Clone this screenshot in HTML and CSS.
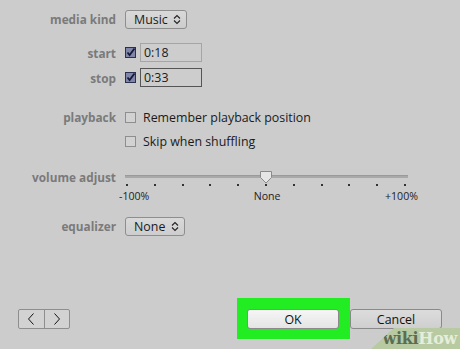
FILE: index.html
```html
<!DOCTYPE html>
<html lang="en">
<head>
    <meta charset="UTF-8">
    <meta name="viewport" content="width=device-width, initial-scale=1.0">
    <title>Options</title>
    <link rel="stylesheet" href="styles.css">
</head>
<body>
    <div class="panel">
        <div class="row row-kind">
            <span class="label">media kind</span>
            <div class="popup">
                <span>Music</span>
                <svg class="updown" width="8" height="11" viewBox="0 0 8 11"><path d="M1 4.5 L4 1.5 L7 4.5 M1 6.5 L4 9.5 L7 6.5" fill="none" stroke="#222" stroke-width="1.1"/></svg>
            </div>
        </div>

        <div class="row row-start">
            <span class="label">start</span>
            <svg class="check" width="11" height="11" viewBox="0 0 11 11"><rect x="0.5" y="0.5" width="10" height="10" fill="#7f86aa" stroke="#2b3050"/><path d="M2.5 5.5 L4.6 8 L9.5 1.5" fill="none" stroke="#151838" stroke-width="1.8"/></svg>
            <div class="field">0:18</div>
        </div>
        <div class="row row-stop">
            <span class="label">stop</span>
            <svg class="check" width="11" height="11" viewBox="0 0 11 11"><rect x="0.5" y="0.5" width="10" height="10" fill="#7f86aa" stroke="#2b3050"/><path d="M2.5 5.5 L4.6 8 L9.5 1.5" fill="none" stroke="#151838" stroke-width="1.8"/></svg>
            <div class="field field-dark">0:33</div>
        </div>

        <div class="row row-playback">
            <span class="label">playback</span>
            <span class="box"></span>
            <span class="text">Remember playback position</span>
        </div>
        <div class="row row-skip">
            <span class="label"></span>
            <span class="box"></span>
            <span class="text">Skip when shuffling</span>
        </div>

        <div class="row row-volume">
            <span class="label">volume adjust</span>
            <div class="slider">
                <div class="track">
                    <svg class="thumb" width="14" height="13" viewBox="0 0 14 13"><path d="M1.5 0.5 H12.5 V6.5 L7 12 L1.5 6.5 Z" fill="#e6e6e6" stroke="#8a8a8a"/></svg>
                </div>
                <div class="ticks">
                    <i></i><i></i><i></i><i></i><i></i><i></i><i></i><i></i><i></i><i></i><i></i>
                </div>
                <div class="scale">
                    <span>-100%</span>
                    <span>None</span>
                    <span>+100%</span>
                </div>
            </div>
        </div>

        <div class="row row-eq">
            <span class="label">equalizer</span>
            <div class="popup popup-eq">
                <span>None</span>
                <svg class="updown" width="8" height="11" viewBox="0 0 8 11"><path d="M1 4.5 L4 1.5 L7 4.5 M1 6.5 L4 9.5 L7 6.5" fill="none" stroke="#222" stroke-width="1.1"/></svg>
            </div>
        </div>
    </div>

    <div class="footer">
        <div class="nav">
            <button class="nav-btn"><svg width="8" height="12" viewBox="0 0 8 12"><path d="M6.5 0.5 L1.5 6 L6.5 11.5" fill="none" stroke="#111" stroke-width="1"/></svg></button>
            <button class="nav-btn"><svg width="8" height="12" viewBox="0 0 8 12"><path d="M1.5 0.5 L6.5 6 L1.5 11.5" fill="none" stroke="#111" stroke-width="1"/></svg></button>
        </div>
        <div class="ok-frame">
            <button class="btn btn-ok">OK</button>
        </div>
        <button class="btn btn-cancel">Cancel</button>
    </div>

    <div class="watermark"><b>wiki</b><span>How</span></div>
</body>
</html>
```

FILE: styles.css
```css
body {
    margin: 0;
    width: 460px;
    height: 349px;
    background: #cccccc;
    font-family: "Open Sans", "Noto Sans", sans-serif;
    font-size: 12.4px;
    color: #1a1a1a;
    position: relative;
    overflow: hidden;
}

.panel {
    display: flex;
    flex-direction: column;
    padding-top: 9px;
}

.row {
    display: flex;
    align-items: center;
    height: 20px;
}

.label {
    width: 116px;
    margin-right: 9px;
    text-align: right;
    font-weight: bold;
    font-size: 11.8px;
    color: #7a7a7a;
    flex-shrink: 0;
}

.row-start { margin-top: 14px; height: 19px; }
.row-stop { margin-top: 6px; height: 19px; }
.row-playback { margin-top: 20px; }
.row-skip { margin-top: 4px; }
.row-volume { margin-top: 18px; align-items: flex-start; height: auto; }
.row-eq { margin-top: 14px; }

.popup {
    display: flex;
    align-items: center;
    justify-content: space-between;
    height: 19px;
    width: 62px;
    box-sizing: border-box;
    padding: 0 5px 0 8px;
    border: 1px solid #8e8e8e;
    border-radius: 3px;
    background: linear-gradient(#d9d9d9, #cdcdcd);
}

.popup-eq { width: 60px; }

.updown { flex-shrink: 0; }

.check { flex-shrink: 0; }

.field {
    margin-left: 4px;
    width: 62px;
    height: 19px;
    box-sizing: border-box;
    border: 1px solid #a5a5a5;
    background: #cdcdcd;
    padding-left: 3px;
    line-height: 17px;
}

.field-dark { border-color: #555; }

.box {
    width: 9px;
    height: 9px;
    border: 1px solid #8e8e8e;
    background: #d2d2d2;
    flex-shrink: 0;
}

.text {
    margin-left: 7px;
}

.slider {
    width: 299px;
    margin-left: -6px;
    padding-top: 6px;
}

.track {
    position: relative;
    margin-left: 6px;
    width: 283px;
    height: 3px;
    background: #a9a9a9;
    border-top: 1px solid #9a9a9a;
    box-sizing: border-box;
}

.thumb {
    position: absolute;
    left: 134px;
    top: -5px;
}

.ticks {
    display: flex;
    justify-content: space-between;
    width: 280px;
    margin: 6px 0 0 7px;
}

.ticks i {
    width: 2px;
    height: 2px;
    background: #333;
}

.scale {
    display: flex;
    justify-content: space-between;
    font-size: 10.6px;
    line-height: 12px;
    margin-top: 4px;
    color: #222;
}

.footer {
    position: absolute;
    left: 18px;
    top: 309px;
    display: flex;
    align-items: flex-start;
}

.nav {
    display: flex;
    width: 52px;
    height: 20px;
    border: 1px solid #8e8e8e;
    border-radius: 2px;
    box-sizing: border-box;
    background: #d2d2d2;
}

.nav-btn {
    flex: 1;
    border: none;
    background: transparent;
    padding: 0;
    display: flex;
    align-items: center;
    justify-content: center;
}

.nav-btn + .nav-btn { border-left: 1px solid #8e8e8e; }

.ok-frame {
    margin: -11px 0 0 167px;
    padding: 11px 11px 10px 10px;
    background: #22ec22;
}

.btn {
    display: block;
    width: 92px;
    height: 20px;
    border: 1px solid #8a8a8a;
    border-radius: 3px;
    font-family: "Open Sans", "Noto Sans", sans-serif;
    font-size: 12.4px;
    color: #111;
    padding: 0;
}

.btn-ok {
    background: linear-gradient(#f6f6f6, #e4e4e4);
}

.btn-cancel {
    background: linear-gradient(#dcdcdc, #cfcfcf);
}

.watermark {
    position: absolute;
    right: 0;
    bottom: 0;
    width: 89px;
    height: 21px;
    background: #b7caa2;
    clip-path: polygon(23px 0, 100% 0, 100% 100%, 0 100%);
    font-family: "DejaVu Serif", "Liberation Serif", serif;
    font-weight: bold;
    font-size: 16px;
    line-height: 22px;
    text-align: right;
    padding-right: 3px;
    box-sizing: border-box;
    letter-spacing: -0.3px;
}

.watermark b { color: #5d6d51; }
.watermark span { color: #e6eedb; }
```
